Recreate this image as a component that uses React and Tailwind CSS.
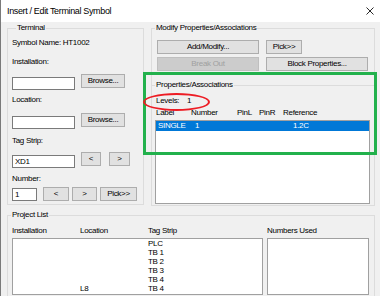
import React from "react";

function Btn({ w, children, disabled, cls = "" }) {
  const tone = disabled
    ? "border-[#bfbfbf] bg-[#cccccc] text-[#a0a0a0]"
    : "border-[#adadad] bg-[#e1e1e1] text-black";
  return (
    <div className={`h-[14px] shrink-0 flex items-center justify-center border leading-none ${tone} ${w} ${cls}`}>
      {children}
    </div>
  );
}

function Input({ w, h = "h-[13px]", cls = "", children }) {
  return (
    <div className={`shrink-0 bg-white border border-[#7a7a7a] pl-[2px] flex items-center leading-none ${w} ${h} ${cls}`}>
      {children}
    </div>
  );
}

export default function App() {
  const rows = [
    ["", "PLC"],
    ["", "TB 1"],
    ["", "TB 2"],
    ["", "TB 3"],
    ["", "TB 4"],
    ["L8", "TB 4"],
  ];
  return (
    <div className="relative w-[380px] h-[296px] overflow-hidden bg-[#f0f0f0] border-l border-[#7a7a7a] text-[8px] tracking-[-0.3px] text-black font-['Liberation_Sans',Arial,sans-serif]">
      {/* title bar */}
      <div className="h-[22px] bg-white flex items-center pl-[6px] pr-[6px]">
        <span className="text-[9px] tracking-[-0.35px] leading-none">Insert / Edit Terminal Symbol</span>
        <svg className="ml-auto" width="8" height="8" viewBox="0 0 8 8">
          <path d="M0.5 0.5 L7.5 7.5 M7.5 0.5 L0.5 7.5" stroke="#111" strokeWidth="0.9" fill="none" />
        </svg>
      </div>

      <div className="pl-[6px] pt-[1px]">
        <div className="flex gap-[7px]">
          {/* Terminal */}
          <fieldset className="w-[137px] h-[182px] border border-[#dcdcdc] pl-[4px]">
            <legend className="ml-[4px] px-[1px] leading-[10px]">Terminal</legend>
            <div className="mt-[5px] leading-[10px]">Symbol Name: HT1002</div>
            <div className="mt-[9px] leading-[10px]">Installation:</div>
            <div className="mt-[7px] h-[15px] flex items-start">
              <Input w="w-[63px]" cls="mt-[3px]" />
              <Btn w="w-[44px]" cls="ml-[6px]">Browse...</Btn>
            </div>
            <div className="mt-[6px] leading-[10px]">Location:</div>
            <div className="mt-[8px] h-[15px] flex items-start">
              <Input w="w-[63px]" cls="mt-[3px]" />
              <Btn w="w-[44px]" cls="ml-[6px]">Browse...</Btn>
            </div>
            <div className="mt-[8px] leading-[10px]">Tag Strip:</div>
            <div className="mt-[6px] h-[15px] flex items-start">
              <Input w="w-[63px]" cls="mt-[3px]">XD1</Input>
              <Btn w="w-[20px]" cls="ml-[6px]">&lt;</Btn>
              <Btn w="w-[21px]" cls="ml-[8px]">&gt;</Btn>
            </div>
            <div className="mt-[7px] leading-[10px]">Number:</div>
            <div className="mt-[3px] h-[14px] flex items-start">
              <Input w="w-[25px]" cls="mt-[1px]">1</Input>
              <Btn w="w-[26px]" cls="ml-[6px]">&lt;</Btn>
              <Btn w="w-[25px]" cls="ml-[3px]">&gt;</Btn>
              <Btn w="w-[37px]" cls="ml-[3px]">Pick&gt;&gt;</Btn>
            </div>
          </fieldset>

          {/* Modify Properties/Associations */}
          <fieldset className="w-[224px] h-[183px] border border-[#dcdcdc]">
            <legend className="ml-[3px] px-[1px] leading-[10px]">Modify Properties/Associations</legend>
            <div className="mt-[7px] pl-[5px] flex gap-[7px]">
              <Btn w="w-[102px]">Add/Modify...</Btn>
              <Btn w="w-[36px]">Pick&gt;&gt;</Btn>
            </div>
            <div className="mt-[3px] pl-[5px] flex gap-[7px]">
              <Btn w="w-[102px]" disabled>Break Out</Btn>
              <Btn w="w-[102px]">Block Properties...</Btn>
            </div>
            <fieldset className="mt-[9px] w-full border-t border-[#dcdcdc]">
              <legend className="ml-[3px] px-[1px] leading-[10px]">Properties/Associations</legend>
              <div className="mt-[6px] pl-[4px] leading-[10px] flex">
                <span className="w-[31px]">Levels:</span>
                <span>1</span>
              </div>
              <div className="mt-[2px] pl-[4px] leading-[10px] flex">
                <span className="w-[35px]">Label</span>
                <span className="w-[46px]">Number</span>
                <span className="w-[22px]">PinL</span>
                <span className="w-[24px]">PinR</span>
                <span>Reference</span>
              </div>
              <div className="mt-[2px] ml-[3px] w-[215px] h-[84px] bg-white border border-[#a0a0a0]">
                <div className="h-[10px] bg-[#0078d7] text-white leading-[10px] flex pl-[2px]">
                  <span className="w-[37px]">SINGLE</span>
                  <span className="w-[98px]">1</span>
                  <span>1.2C</span>
                </div>
              </div>
            </fieldset>
          </fieldset>
        </div>

        {/* Project List */}
        <fieldset className="mt-[4px] w-[368px] h-[100px] border border-[#dcdcdc]">
          <legend className="ml-[3px] px-[1px] leading-[10px]">Project List</legend>
          <div className="mt-[6px] pl-[4px] leading-[10px] flex">
            <span className="w-[68px]">Installation</span>
            <span className="w-[68px]">Location</span>
            <span className="w-[119px]">Tag Strip</span>
            <span>Numbers Used</span>
          </div>
          <div className="mt-[2px] pl-[4px] flex gap-[4px]">
            <div className="w-[251px] h-[57px] bg-white border border-[#a0a0a0]">
              {rows.map((r, i) => (
                <div key={i} className="h-[9px] leading-[9px] flex">
                  <span className="w-[67px]"></span>
                  <span className="w-[68px]">{r[0]}</span>
                  <span>{r[1]}</span>
                </div>
              ))}
            </div>
            <div className="w-[102px] h-[57px] bg-white border border-[#a0a0a0]"></div>
          </div>
        </fieldset>
      </div>

      {/* annotations */}
      <div className="absolute left-[142px] top-[72px] w-[234px] h-[83px] border-[3px] border-[#22b14c]"></div>
      <div className="absolute left-[142px] top-[93px] w-[67px] h-[18px] border-2 border-[#ed1c24] rounded-[50%]"></div>
    </div>
  );
}
